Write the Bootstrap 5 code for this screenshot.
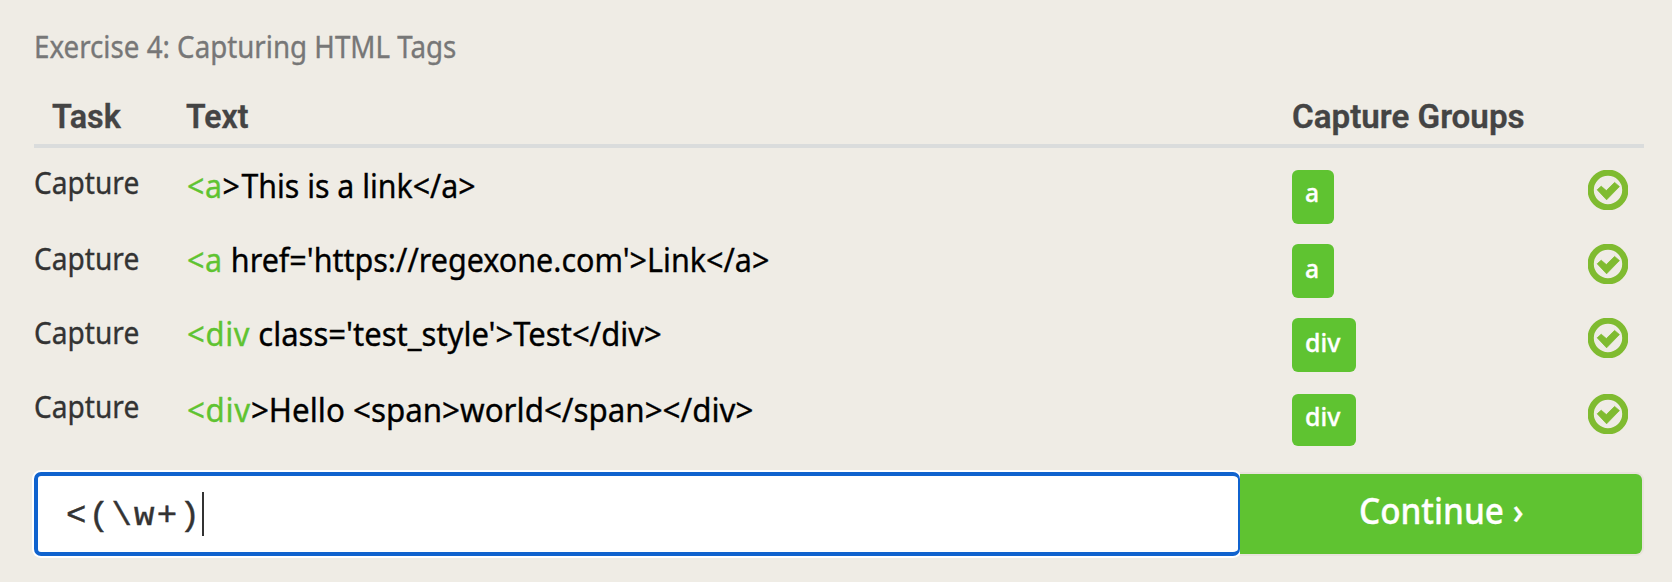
<!DOCTYPE html>
<html lang="en">
<head>
<meta charset="utf-8">
<title>Exercise 4: Capturing HTML Tags</title>
<link rel="stylesheet" href="https://cdn.jsdelivr.net/npm/bootstrap@5.3.0/dist/css/bootstrap.min.css">
<style>
  body { background: #efece5; color: #333; font-family: "Noto Sans", sans-serif; overflow: hidden; }
  .exercise { padding: 29px 28px 0 34px; height: 582px; }
  /* slightly narrowed text */
  .fit { display: inline-block; white-space: pre; transform-origin: 0 50%; transform: scaleX(var(--fit, .93)); -webkit-text-stroke: .35px currentColor; }
  .title { font-size: 30px; line-height: 36px; color: #777; }
  .grid-line { display: grid; grid-template-columns: 153px 1105px 295px 57px; }
  .heads { height: 83px; border-bottom: 4px solid #dadcdc; padding-top: 24px; margin-bottom: 12px;
    font: 600 33px/56px Roboto, sans-serif; color: #444; }
  .task { height: 74px; }
  .task-tall { height: 76px; }
  .verb { font-size: 30px; line-height: 36px; padding-top: 5px; --fit: .937; }
  .sample { font-size: 32px; line-height: 38px; padding-top: 7px; color: #000; }
  .sample b { color: #5fc331; font-weight: 400; letter-spacing: .7px; }
  .sample i { font-style: normal; letter-spacing: 1.6px; }
  .chip { display: inline-block; height: 54px; margin-top: 10px; padding: 0 13px; border-radius: 6px;
    background: #5fc331; color: #fff; font-size: 26px; font-weight: 500; line-height: 44px; }
  .chip-a { width: 42px; --fit: .95; }
  .chip-div { width: 64px; --fit: .96; }
  .low .verb { padding-top: 7px; }
  .low .chip { line-height: 48px; }
  .chip-short { height: 52px; }
  .tick { width: 40px; height: 40px; margin: 10px 0 0 1px; display: block; }
  .answer { margin-top: 14px; }
  .pattern { position: relative; z-index: 1; width: 1206px; height: 84px; background: #fff; border: 4px solid #1063ce; border-right-width: 2px;
    border-radius: 7px; box-shadow: 0 0 0 2px #fff; padding-left: 28px; }
  .pattern span { font: 34px/76px "Liberation Mono", monospace; letter-spacing: 2.3px; color: #333; padding-top: 4px; -webkit-text-stroke: .5px #333; }
  .caret { width: 2px; height: 44px; background: #333; }
  .go { position: relative; z-index: 2; clip-path: inset(-2px -2px -2px 0); width: 402px; height: 80px; background: #5fc331; color: #fff; border: 0; border-radius: 0 6px 6px 0;
    box-shadow: 0 0 0 2px #e8e3dc; font-size: 36px; font-weight: 500; line-height: 74px; padding: 0 0 6px 119px; text-align: left; }
  .go:hover { background: #5fc331; color: #fff; }
</style>
</head>
<body>
<svg width="0" height="0" class="d-none">
  <symbol id="tick" viewBox="0 0 40 40">
    <circle cx="20" cy="20" r="17.3" fill="none" stroke="#7fbb30" stroke-width="6.2"/>
    <path d="M9.2 19.8 13.2 16.2 18.3 20.6 26.6 12.4 31.4 16.6 18.6 29.8Z" fill="#7fbb30" stroke="#7fbb30" stroke-width=".8" stroke-linejoin="round"/>
  </symbol>
</svg>
<main class="exercise">
  <div class="title"><span class="fit" style="--fit:.924">Exercise 4: Capturing HTML Tags</span></div>
  <div class="grid-line heads">
    <div style="padding-left:18px"><span class="fit" style="--fit:.98">Task</span></div><div style="margin-left:-1px"><span class="fit" style="--fit:.97">Text</span></div><div><span class="fit" style="--fit:1.005">Capture Groups</span></div><div></div>
  </div>
  <div class="grid-line task">
    <div class="verb"><span class="fit">Capture</span></div>
    <div class="sample"><span class="fit" style="--fit:.946"><b>&lt;a</b><i>&gt;</i>This is a link&lt;/a&gt;</span></div>
    <div><div class="chip chip-a"><span class="fit">a</span></div></div>
    <svg class="tick"><use href="#tick"/></svg>
  </div>
  <div class="grid-line task low">
    <div class="verb"><span class="fit">Capture</span></div>
    <div class="sample"><span class="fit" style="--fit:.953"><b>&lt;a</b> href='https://regexone.com'&gt;Link&lt;/a&gt;</span></div>
    <div><div class="chip chip-a"><span class="fit">a</span></div></div>
    <svg class="tick"><use href="#tick"/></svg>
  </div>
  <div class="grid-line task task-tall low">
    <div class="verb"><span class="fit">Capture</span></div>
    <div class="sample"><span class="fit" style="--fit:.969"><b>&lt;div</b> class='test_style'&gt;Test&lt;/div&gt;</span></div>
    <div><div class="chip chip-div"><span class="fit">div</span></div></div>
    <svg class="tick"><use href="#tick"/></svg>
  </div>
  <div class="grid-line task">
    <div class="verb"><span class="fit">Capture</span></div>
    <div class="sample"><span class="fit" style="--fit:.979"><b>&lt;div</b>&gt;Hello &lt;span&gt;world&lt;/span&gt;&lt;/div&gt;</span></div>
    <div><div class="chip chip-div chip-short"><span class="fit">div</span></div></div>
    <svg class="tick"><use href="#tick"/></svg>
  </div>
  <div class="answer d-flex align-items-center">
    <div class="pattern d-flex align-items-center"><span>&lt;(\w+)</span><div class="caret"></div></div>
    <button class="go btn" type="button"><span class="fit" style="--fit:.925">Continue ›</span></button>
  </div>
</main>
<script src="https://cdn.jsdelivr.net/npm/bootstrap@5.3.0/dist/js/bootstrap.bundle.min.js"></script>
</body>
</html>
